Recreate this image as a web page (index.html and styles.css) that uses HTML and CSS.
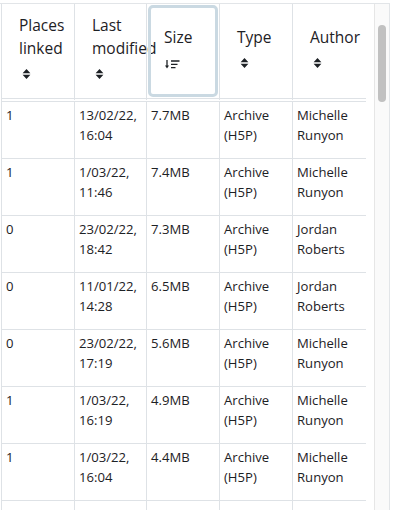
FILE: index.html
```html
<!DOCTYPE html>
<html lang="en">
<head>
<meta charset="utf-8">
<title>Content bank</title>
<link rel="stylesheet" href="styles.css">
</head>
<body>
<div class="frame">
  <div class="viewport">
    <table class="files">
      <thead>
        <tr>
          <th class="c1">Places linked<span class="sort"><svg class="ico-sort" viewBox="0 0 9 12" width="9" height="12"><path d="M0.6 5.2 L4.5 1 L8.4 5.2 Z M0.6 6.8 L8.4 6.8 L4.5 11 Z"/></svg></span></th>
          <th class="c2">Last modified<span class="sort"><svg class="ico-sort" viewBox="0 0 9 12" width="9" height="12"><path d="M0.6 5.2 L4.5 1 L8.4 5.2 Z M0.6 6.8 L8.4 6.8 L4.5 11 Z"/></svg></span></th>
          <th class="c3 sorted">Size<span class="sort"><svg class="ico-amount" viewBox="0 0 15 9" width="15" height="9"><path d="M2 0 V6.5" stroke-width="1.3"/><path d="M0 5.6 L4 5.6 L2 8.6 Z" stroke="none"/><path d="M6 1 H14.5 M6 4.3 H12.5 M6 7.6 H10.5" stroke-width="1.3"/></svg></span></th>
          <th class="c4">Type<span class="sort"><svg class="ico-sort" viewBox="0 0 9 12" width="9" height="12"><path d="M0.6 5.2 L4.5 1 L8.4 5.2 Z M0.6 6.8 L8.4 6.8 L4.5 11 Z"/></svg></span></th>
          <th class="c5">Author<span class="sort"><svg class="ico-sort" viewBox="0 0 9 12" width="9" height="12"><path d="M0.6 5.2 L4.5 1 L8.4 5.2 Z M0.6 6.8 L8.4 6.8 L4.5 11 Z"/></svg></span></th>
        </tr>
      </thead>
      <tbody>
        <tr><td>1</td><td>13/02/22, 16:04</td><td>7.7MB</td><td>Archive (H5P)</td><td>Michelle Runyon</td></tr>
        <tr><td>1</td><td>1/03/22, 11:46</td><td>7.4MB</td><td>Archive (H5P)</td><td>Michelle Runyon</td></tr>
        <tr><td>0</td><td>23/02/22, 18:42</td><td>7.3MB</td><td>Archive (H5P)</td><td>Jordan Roberts</td></tr>
        <tr><td>0</td><td>11/01/22, 14:28</td><td>6.5MB</td><td>Archive (H5P)</td><td>Jordan Roberts</td></tr>
        <tr><td>0</td><td>23/02/22, 17:19</td><td>5.6MB</td><td>Archive (H5P)</td><td>Michelle Runyon</td></tr>
        <tr><td>1</td><td>1/03/22, 16:19</td><td>4.9MB</td><td>Archive (H5P)</td><td>Michelle Runyon</td></tr>
        <tr><td>1</td><td>1/03/22, 16:04</td><td>4.4MB</td><td>Archive (H5P)</td><td>Michelle Runyon</td></tr>
        <tr class="blank"><td></td><td></td><td></td><td></td><td></td></tr>
      </tbody>
    </table>
  </div>
  <div class="scrollbar"><div class="thumb"></div></div>
</div>
</body>
</html>
```
FILE: styles.css
```css
html, body {
  margin: 0;
  height: 510px;
  overflow: hidden;
  background: #ffffff;
}
body {
  font-family: "Open Sans", "Noto Sans", sans-serif;
  color: #1d2125;
}
.frame {
  display: flex;
  width: 389px;
  height: 506px;
  margin-top: 3px;
  border-top: 1px solid #e2e5e8;
  border-right: 1px solid #e2e5e8;
}
.viewport {
  flex: 1;
  padding-left: 1px;
  overflow: hidden;
}
.scrollbar {
  width: 14px;
  border-left: 1px solid #e6e6e6;
  background: #fafafa;
}
.thumb {
  margin: 21px 0 0 3px;
  width: 8px;
  height: 77px;
  border-radius: 4px;
  background: #c1c1c1;
}
.files {
  border-collapse: separate;
  border-spacing: 0;
  table-layout: fixed;
  width: 365px;
  border-left: 1px solid #dee2e6;
}
.files th,
.files td {
  box-sizing: border-box;
  border-right: 1px solid #dee2e6;
  text-align: left;
}
.files th:last-child,
.files td:last-child {
  border-right: 0;
}
.files th {
  position: relative;
  font-weight: 400;
  font-size: 15.5px;
  line-height: 23px;
  padding: 10px 4px 15px 17px;
  vertical-align: middle;
  border-bottom: 4px double #dee2e6;
}
.c1 { width: 73px; }
.c2 { width: 72px; }
.c3 { width: 73px; }
.c4 { width: 73px; }
.c5 { width: 73px; }
.sort {
  display: block;
  height: 23px;
}
.ico-sort {
  fill: #1d2125;
  vertical-align: -3px;
  margin-left: 3px;
}
.ico-amount {
  fill: #1d2125;
  stroke: #1d2125;
  vertical-align: -3px;
  margin-left: 1px;
}
.sorted::after {
  content: "";
  position: absolute;
  top: 1px;
  left: 1px;
  right: 1px;
  bottom: 1px;
  border: 3px solid #cad9e2;
  border-radius: 5px;
  pointer-events: none;
}
.files td {
  font-size: 13.125px;
  line-height: 19.7px;
  padding: 4px 4px 12.6px 4px;
  vertical-align: top;
  border-bottom: 1px solid #dee2e6;
}
.files .blank td {
  height: 56px;
}
```
